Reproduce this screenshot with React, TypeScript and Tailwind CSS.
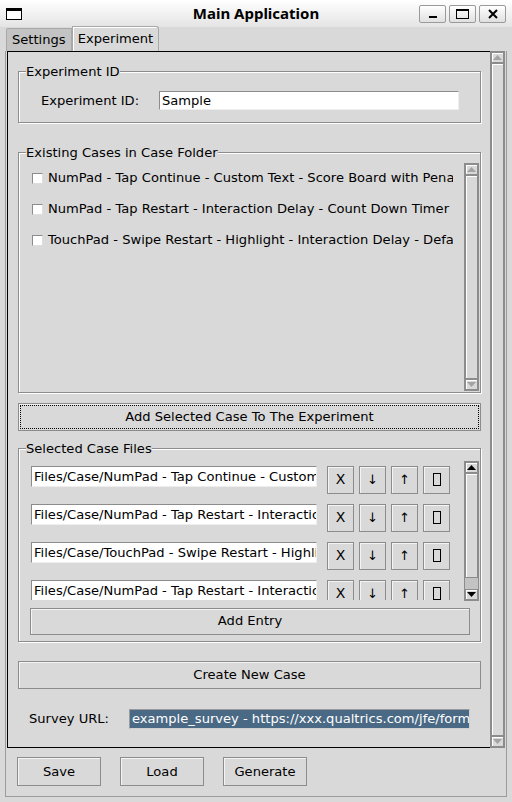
import React from 'react'

const caseNames = [
  'NumPad - Tap Continue - Custom Text - Score Board with Penalty',
  'NumPad - Tap Restart - Interaction Delay - Count Down Timer',
  'TouchPad - Swipe Restart - Highlight - Interaction Delay - Default',
]

const selectedFiles = [
  'Files/Case/NumPad - Tap Continue - Custom Text - Score Board with Penalty',
  'Files/Case/NumPad - Tap Restart - Interaction Delay - Count Down Timer',
  'Files/Case/TouchPad - Swipe Restart - Highlight - Interaction Delay',
  'Files/Case/NumPad - Tap Restart - Interaction Delay - Count Down Timer',
]

const btn =
  'border border-[#8c8c8c] bg-[#d9d9d9] shadow-[inset_1px_1px_0_#f4f4f4] flex items-center justify-center'

function Arrow({ up, dark }: { up?: boolean; dark?: boolean }) {
  return (
    <div className="h-[11px] border border-[#8c8c8c] bg-[#d9d9d9] shadow-[inset_1px_1px_0_#fff] flex items-center justify-center">
      <svg width="9" height="5" viewBox="0 0 9 5">
        <polygon
          points={up ? '4.5,0 9,5 0,5' : '0,0 9,0 4.5,5'}
          fill={dark ? '#000' : '#a3a3a3'}
        />
      </svg>
    </div>
  )
}

interface ScrollbarProps {
  height: number
  after?: number
  dark?: boolean
}

function Scrollbar({ height, after = 0, dark }: ScrollbarProps) {
  return (
    <div
      className="w-[15px] shrink-0 border border-[#8c8c8c] bg-[#c3c3c3] flex flex-col"
      style={{ height }}
    >
      <Arrow up dark={dark} />
      <div className="flex-1 flex flex-col">
        <div className="flex-1 border border-[#8c8c8c] bg-[#d9d9d9] shadow-[inset_1px_1px_0_#fff]" />
        <div style={{ height: after }} />
      </div>
      <Arrow dark={dark} />
    </div>
  )
}

function Group({ title, className, children }: { title: string; className?: string; children: React.ReactNode }) {
  return (
    <fieldset
      className={`min-w-0 border border-[#8c8c8c] shadow-[inset_1px_1px_0_#fff,1px_1px_0_#fff] ${className ?? ''}`}
    >
      <legend className="ml-[7px] bg-[#d9d9d9] leading-[15px]">{title}</legend>
      {children}
    </fieldset>
  )
}

export default function App() {
  return (
    <div
      className="w-[512px] h-[802px] bg-[#d9d9d9] text-black text-[13.08px] overflow-hidden flex flex-col"
      style={{ fontFamily: '"DejaVu Sans", sans-serif' }}
    >
      {/* title bar */}
      <div className="h-[27px] shrink-0 bg-gradient-to-b from-white to-[#e4e4e4] grid grid-cols-[1fr_auto_1fr] items-center">
        <div className="pl-[6px] flex">
          <div className="w-[16px] h-[12px] border border-black border-t-[3px] bg-white" />
        </div>
        <div
          className="font-bold text-[15px] leading-none"
          style={{ fontFamily: '"Noto Sans", "DejaVu Sans", sans-serif' }}
        >
          Main Application
        </div>
        <div className="flex justify-end gap-[3px] pr-[6px]">
          <div className="w-[27px] h-[18px] rounded-[2px] border border-[#9a9a9a] bg-gradient-to-b from-white to-[#e0e0e0] flex items-end justify-center pb-[4px]">
            <div className="w-[8px] h-[2px] bg-black" />
          </div>
          <div className="w-[27px] h-[18px] rounded-[2px] border border-[#9a9a9a] bg-gradient-to-b from-white to-[#e0e0e0] flex items-center justify-center">
            <div className="w-[13px] h-[10px] border-[1.5px] border-black border-t-[2px]" />
          </div>
          <div className="w-[27px] h-[18px] rounded-[2px] border border-[#9a9a9a] bg-gradient-to-b from-white to-[#e0e0e0] flex items-center justify-center">
            <svg width="10" height="10" viewBox="0 0 10 10">
              <path d="M1 1 L9 9 M9 1 L1 9" stroke="#000" strokeWidth="2" />
            </svg>
          </div>
        </div>
      </div>

      {/* tabs */}
      <div className="h-[24px] shrink-0 flex items-end pl-[6px]">
        <div className="h-[23px] px-[5px] border border-b-0 border-[#a8a8a8] bg-[#c3c3c3] flex items-center rounded-tl-[2px]">
          Settings
        </div>
        <div className="h-[25px] px-[5px] border border-b-0 border-[#a8a8a8] bg-[#d9d9d9] shadow-[inset_1px_1px_0_#fff] flex items-center rounded-tr-[3px]">
          Experiment
        </div>
      </div>

      {/* notebook pane */}
      <div className="ml-[5px] w-[502px] h-[746px] shrink-0 border border-t-0 border-[#9b9b9b] flex flex-col">
        <div className="flex pl-[1px]">
          <div className="w-[483px] h-[697px] border-t border-l border-b border-black overflow-hidden">
            <div className="ml-[10px] w-[463px] flex flex-col">
              <Group title="Experiment ID" className="mt-[12px]">
                <div className="pt-[12px] pb-[11px] pl-[22px] flex items-center">
                  <div className="w-[118px]">Experiment ID:</div>
                  <div className="w-[300px] h-[19px] bg-white border border-[#8c8c8c] border-r-[#eee] border-b-[#eee] pl-[2px] leading-[17px]">
                    Sample
                  </div>
                </div>
              </Group>

              <Group title="Existing Cases in Case Folder" className="mt-[22px]">
                <div className="pt-[3px] pb-[1px] pr-[1px] flex">
                  <div className="flex-1 min-w-0 mr-[11px] overflow-hidden flex flex-col pl-[13px] h-[228px]">
                    {caseNames.map((c, i) => (
                      <div key={i} className="h-[31px] shrink-0 flex items-center gap-[5px] whitespace-nowrap">
                        <div className="w-[11px] h-[11px] shrink-0 bg-white border border-[#8c8c8c] border-r-[#ddd] border-b-[#ddd]" />
                        <span>{c}</span>
                      </div>
                    ))}
                  </div>
                  <Scrollbar height={228} />
                </div>
              </Group>

              <button
                className={`${btn} mt-[10px] h-[28px] w-full outline-1 outline-dotted outline-black -outline-offset-3`}
              >
                Add Selected Case To The Experiment
              </button>

              <Group title="Selected Case Files" className="mt-[10px]">
                <div className="pt-[5px] pr-[1px] flex">
                  <div className="flex-1 min-w-0 mr-[13px] h-[139px] overflow-hidden pl-[12px] pt-[5px] flex flex-col gap-[10px]">
                    {selectedFiles.map((f, i) => (
                      <div key={i} className="h-[28px] shrink-0 flex items-start">
                        <div className="w-[286px] h-[21px] bg-white border border-[#8c8c8c] border-r-[#eee] border-b-[#eee] pl-[2px] leading-[19px] whitespace-nowrap overflow-hidden">
                          {f}
                        </div>
                        <div className="ml-[10px] flex gap-[5px]">
                          <div className={`${btn} w-[27px] h-[28px] text-[14px]`}>X</div>
                          <div className={`${btn} w-[27px] h-[28px]`}>↓</div>
                          <div className={`${btn} w-[27px] h-[28px]`}>↑</div>
                          <div className={`${btn} w-[27px] h-[28px]`}>
                            <div className="w-[8px] h-[13px] border border-black" />
                          </div>
                        </div>
                      </div>
                    ))}
                  </div>
                  <Scrollbar height={140} after={11} dark />
                </div>
                <div className={`${btn} mt-[7px] ml-[11px] mr-[10px] h-[27px] mb-[6px]`}>Add Entry</div>
              </Group>

              <div className={`${btn} mt-[19px] h-[28px]`}>Create New Case</div>

              <div className="mt-[20px] pl-[11px] flex items-center">
                <div className="w-[100px]">Survey URL:</div>
                <div className="w-[341px] h-[20px] bg-[#4a6984] text-white border border-[#9a9a9a] border-r-[#d0d0d0] border-b-[#d0d0d0] pl-[2px] leading-[18px] whitespace-nowrap overflow-hidden">
                  example_survey - https://xxx.qualtrics.com/jfe/form/SV_example
                </div>
              </div>
            </div>
          </div>
          <Scrollbar height={697} />
        </div>

        <div className="mt-[9px] ml-[11px] flex gap-[19px]">
          <div className={`${btn} w-[84px] h-[29px]`}>Save</div>
          <div className={`${btn} w-[84px] h-[29px]`}>Load</div>
          <div className={`${btn} w-[84px] h-[29px]`}>Generate</div>
        </div>
      </div>
    </div>
  )
}
